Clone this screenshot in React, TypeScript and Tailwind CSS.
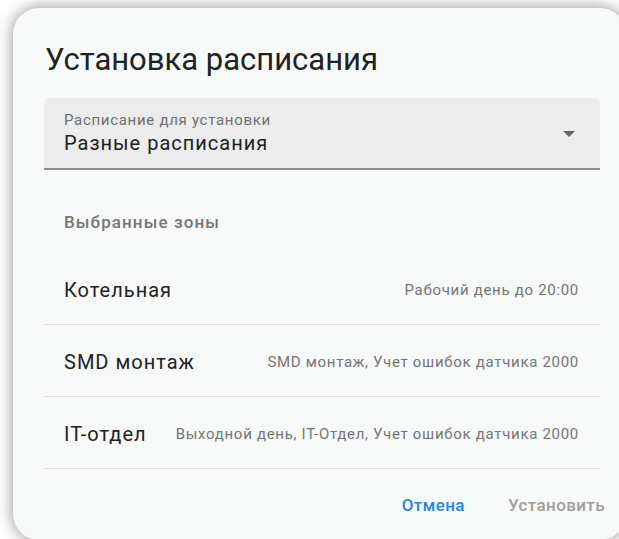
import React from "react";

const zones = [
  { name: "Котельная", schedule: "Рабочий день до 20:00" },
  { name: "SMD монтаж", schedule: "SMD монтаж, Учет ошибок датчика 2000" },
  { name: "IT-отдел", schedule: "Выходной день, IT-Отдел, Учет ошибок датчика 2000" },
];

export default function App() {
  return (
    <div
      className="w-[619px] h-[539px] overflow-hidden bg-white pl-[13px] pt-[8px] flex"
      style={{ fontFamily: "Roboto, 'Noto Sans', sans-serif" }}
    >
      <div className="shrink-0 w-[613px] h-[532px] rounded-[26px] bg-[#f8f9f9] shadow-[0_0_16px_rgba(0,0,0,0.45)] flex flex-col">
        <h2 className="pl-[32px] pt-[34px] text-[31px] leading-[36px] text-[#212121] font-normal">
          Установка расписания
        </h2>

        <div className="mt-[20px] ml-[31px] w-[556px] h-[72px] rounded-t-[5px] bg-[#ececec] border-b-[2px] border-[#8c8c8c] flex items-center pl-[20px] pr-[24px]">
          <div className="flex-1 flex flex-col pt-[2px]">
            <span className="text-[15px] leading-[18px] tracking-[0.7px] text-[#6f6f6f]">Расписание для установки</span>
            <span className="text-[20px] leading-[28px] tracking-[1px] text-[#212121]">Разные расписания</span>
          </div>
          <svg width="14" height="7" viewBox="0 0 14 7" className="mt-[3px]">
            <path d="M1 0h12L7 6z" fill="#666" />
          </svg>
        </div>

        <div className="ml-[51px] mt-[42px] text-[17px] leading-[20px] font-medium tracking-[1.1px] text-[#757575]">
          Выбранные зоны
        </div>

        <div className="mt-[21px] ml-[31px] w-[556px] flex flex-col">
          {zones.map((z) => (
            <div
              key={z.name}
              className="h-[72px] flex items-center justify-between pt-[3px] pl-[20px] pr-[21px] border-b border-[#e0e0e0]"
            >
              <span className="text-[20px] tracking-[1px] text-[#212121] whitespace-nowrap">{z.name}</span>
              <span className="text-[15px] tracking-[0.7px] text-[#757575] whitespace-nowrap ml-[24px]">
                {z.schedule}
              </span>
            </div>
          ))}
        </div>

        <div className="flex justify-end items-center pr-[21px] mt-[24px] gap-[43px]">
          <button className="text-[17px] font-medium tracking-[0.4px] text-[#1e88e5]">Отмена</button>
          <button className="text-[17px] font-medium tracking-[0.4px] text-[#9e9e9e]">Установить</button>
        </div>
      </div>
    </div>
  );
}
